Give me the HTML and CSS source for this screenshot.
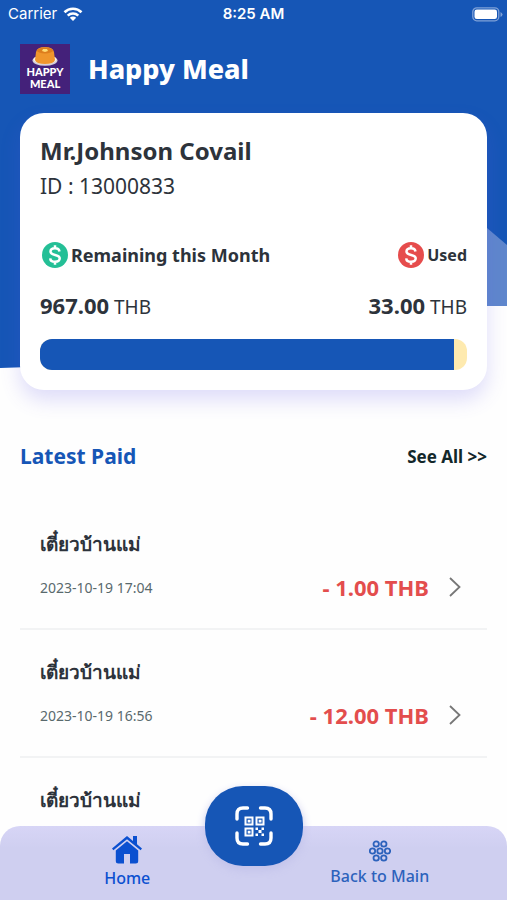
FILE: index.html
```html
<!DOCTYPE html>
<html lang="en">
<head>
<meta charset="utf-8">
<meta name="viewport" content="width=device-width, initial-scale=1">
<title>Happy Meal</title>
<link rel="stylesheet" href="styles.css">
</head>
<body>
<div class="app">
  <svg class="backdrop" viewBox="0 0 507 370" preserveAspectRatio="none" aria-hidden="true">
    <path fill="#1656b6" d="M0 0H507V305H440L60 366L0 368Z"/>
    <path fill="#5f87cc" d="M440 188L507 245V306H440Z"/>
  </svg>

  <div class="status">
    <span class="carrier">Carrier
      <svg width="20" height="15" viewBox="0 0 20 15" fill="none" stroke="#fff" stroke-width="2.6" aria-hidden="true">
        <path d="M1.5 5.2C6.2.6 13.8.6 18.500 5.200M4.700 8.600C7.700 5.800 12.300 5.800 15.300 8.600"/>
        <path fill="#fff" stroke="none" d="M6.800 10.700C8.600 9.100 11.400 9.100 13.200 10.700L10 14Z"/>
      </svg>
    </span>
    <span class="clock">8:25 AM</span>
    <svg class="battery" width="31" height="15" viewBox="0 0 31 15" aria-hidden="true">
      <rect x=".8" y=".8" width="26" height="13" rx="4" fill="none" stroke="#7fa1d7" stroke-width="1.300"/>
      <rect x="2.500" y="2.500" width="22.500" height="9.600" rx="2.300" fill="#fff"/>
      <path d="M28.500 5v5q2-1 2-2.500t-2-2.500" fill="#7fa1d7"/>
    </svg>
  </div>

  <header class="brand">
    <div class="logo">
      <svg width="26" height="20" viewBox="0 0 26 20" aria-hidden="true">
        <ellipse cx="13" cy="14.500" rx="12.500" ry="5.300" fill="#d5d0d8"/>
        <ellipse cx="13" cy="13.500" rx="11.500" ry="4.500" fill="#f5f0ee"/>
        <path d="M3 14L4 6Q5 1 13 1t9 5l1 8q-1 4-10 4T3 14Z" fill="#ef962c"/>
        <ellipse cx="13" cy="4.500" rx="8" ry="3" fill="#dd7d1d"/>
        <path d="M11 3h4l1 2-3 1-3-1Z" fill="#ffdc73"/>
      </svg>
      <span>HAPPY</span><span>MEAL</span>
    </div>
    <h1>Happy Meal</h1>
  </header>

  <section class="card">
    <h2>Mr.Johnson Covail</h2>
    <p class="member">ID : 13000833</p>
    <div class="pair labels">
      <span class="label">
        <svg width="26" height="26" viewBox="0 0 26 26" fill="none" aria-hidden="true"><circle cx="13" cy="13" r="13" fill="#24bf96"/><path d="M17.500 9.500C17.200 7.300 15.600 6.200 13 6.200S8.500 7.500 8.500 9.600C8.500 14.200 17.700 11.700 17.700 16.300 17.700 18.500 15.800 19.800 13 19.800S8.400 18.500 8.200 16.300M13 3.200v3.200M13 19.600v3.200" stroke="#fff" stroke-width="2.500"/></svg>
        Remaining this Month</span>
      <span class="label used">
        <svg width="26" height="26" viewBox="0 0 26 26" fill="none" aria-hidden="true"><circle cx="13" cy="13" r="13" fill="#e64c4c"/><path d="M17.500 9.500C17.200 7.300 15.600 6.200 13 6.200S8.500 7.500 8.500 9.600C8.500 14.200 17.700 11.700 17.700 16.300 17.700 18.500 15.800 19.800 13 19.800S8.400 18.500 8.200 16.300M13 3.200v3.200M13 19.600v3.200" stroke="#fff" stroke-width="2.500"/></svg>
        Used</span>
    </div>
    <div class="pair sums">
      <span><b>967.00</b> THB</span>
      <span><b>33.00</b> THB</span>
    </div>
    <div class="meter"><div class="fill" style="width:97%"></div></div>
  </section>

  <main>
    <div class="pair heading">
      <h2>Latest Paid</h2>
      <a href="#all">See All &gt;&gt;</a>
    </div>
    <ul class="payments">
      <li><a href="#p1"><span class="shop" lang="th">เตี๋ยวบ้านแม่</span>
        <span class="detail"><time>2023-10-19 17:04</time><strong>- 1.00 THB</strong>
        <svg width="12" height="20" viewBox="0 0 12 20" fill="none" stroke="#777" stroke-width="1.800" aria-hidden="true"><path d="M1 1l9.500 9L1 19"/></svg></span></a></li>
      <li><a href="#p2"><span class="shop" lang="th">เตี๋ยวบ้านแม่</span>
        <span class="detail"><time>2023-10-19 16:56</time><strong>- 12.00 THB</strong>
        <svg width="12" height="20" viewBox="0 0 12 20" fill="none" stroke="#777" stroke-width="1.800" aria-hidden="true"><path d="M1 1l9.500 9L1 19"/></svg></span></a></li>
      <li><a href="#p3"><span class="shop" lang="th">เตี๋ยวบ้านแม่</span></a></li>
    </ul>
  </main>

  <nav class="tabs">
    <a class="tab home" href="#home">
      <svg width="30" height="28" viewBox="0 0 30 28" aria-hidden="true"><path fill="#0b50d0" d="M15 0L0 12.500l1.400 1.800L15 3.200l13.600 11.100L30 12.500 25 8.300V0h-4v5ZM15 5.200L3.800 14.400V25q0 2.500 2.500 2.500H12V18h6v9.500h5.700q2.500 0 2.500-2.500V14.400Z"/></svg>
      Home</a>
    <button class="scan" type="button" aria-label="Scan QR code">
      <svg width="38" height="40" viewBox="0 0 38 40" fill="none" stroke="#fff" aria-hidden="true">
        <path stroke-width="3.400" stroke-linecap="round" d="M12.500 2H8Q2 2 2 8v5M25.500 2H30q6 0 6 6v5M2 27v5q0 6 6 6h4.500M36 27v5q0 6-6 6h-4.500"/>
        <path stroke-width="2" d="M10.500 11.500h7v7h-7zM21.500 11.500h7v7h-7zM10.500 22.500h7v7h-7z"/>
        <path fill="#fff" stroke="none" d="M12.700 13.700h2.800v2.800h-2.800zM23.700 13.700h2.800v2.800h-2.800zM12.700 24.700h2.800v2.800h-2.800zM20.500 21.500h2.500v2.500h-2.500zM26.500 21.500h2.500v2.500h-2.500zM23.500 24h3v3h-3zM20.500 27.500h2.500v2.500h-2.500zM26.500 27.500h2.500v2.500h-2.500z"/>
      </svg>
    </button>
    <a class="tab" href="#main">
      <svg width="22" height="22" viewBox="0 0 22 22" fill="none" stroke="#2c62bc" stroke-width="1.800" aria-hidden="true"><circle cx="7.200" cy="4" r="2.700"/><circle cx="14.800" cy="4" r="2.700"/><circle cx="3.500" cy="11" r="2.700"/><circle cx="11" cy="11" r="2.700"/><circle cx="18.500" cy="11" r="2.700"/><circle cx="7.200" cy="18" r="2.700"/><circle cx="14.800" cy="18" r="2.700"/></svg>
      Back to Main</a>
  </nav>
</div>
</body>
</html>
```
FILE: styles.css
```css
* { box-sizing: border-box; }
body {
  margin: 0;
  background: #fefefe;
  color: #2d333b;
  font-family: "Noto Sans", "Open Sans", sans-serif;
}
h1, h2, p, ul { margin: 0; padding: 0; }
a { color: inherit; text-decoration: none; }
svg { display: block; flex: none; }

.app {
  position: relative;
  height: 100vh;
  padding: 0 20px;
  overflow: hidden;
}
.backdrop {
  position: absolute;
  top: 0;
  left: 0;
  z-index: -1;
  width: 100%;
  height: 370px;
}

.status {
  display: grid;
  grid-template-columns: 1fr auto 1fr;
  align-items: center;
  height: 28px;
  margin: 0 -12px;
  color: #fff;
  font: 15px/20px Inter, sans-serif;
}
.carrier { display: flex; align-items: center; gap: 6px; }
.clock { font-weight: 600; }
.battery { justify-self: end; margin-right: -4px; }

.brand {
  display: flex;
  align-items: center;
  gap: 18px;
  margin: 16px 0 19px;
}
.logo {
  display: flex;
  flex-direction: column;
  align-items: center;
  width: 50px;
  height: 50px;
  padding-top: 2px;
  background: #44217a;
  color: #fff;
  font: 900 11px/12px Lato, sans-serif;
}
.brand h1 { color: #fff; font-size: 27px; line-height: 40px; font-weight: 800; }

.card {
  padding: 22px 20px 20px;
  border-radius: 24px;
  background: #fff;
  box-shadow: 0 10px 20px rgba(95, 85, 230, 0.2);
}
.card h2 { font-size: 24px; line-height: 32px; }
.member { font-size: 21px; line-height: 38px; }
.pair { display: flex; align-items: center; justify-content: space-between; }
.labels { height: 32px; margin-top: 34px; }
.label {
  display: flex;
  align-items: center;
  gap: 3px;
  padding-left: 2px;
  font-size: 18px;
  font-weight: 700;
}
.used { font-size: 16px; }
.sums { margin-top: 18px; font-size: 19px; line-height: 32px; }
.sums b { font-size: 22px; }
.meter {
  height: 31px;
  margin-top: 16px;
  overflow: hidden;
  border-radius: 12px;
  background: #feeaaf;
}
.fill { height: 100%; background: #1656b6; }

.heading { height: 32px; margin-top: 50px; }
.heading h2 { color: #1656b6; font-size: 21px; }
.heading a { color: #12272a; font-size: 17px; font-weight: 700; }

.payments { margin-top: 30px; list-style: none; }
.payments li { height: 128px; border-bottom: 2px solid #f2f3f4; }
.payments a { display: block; padding: 24px 26px 0 20px; }
.shop { display: block; font-size: 19px; line-height: 36px; font-weight: 800; }
.detail { display: flex; align-items: center; height: 50px; }
.detail time { flex: 1; color: #59696d; font-size: 14px; }
.detail strong { color: #e34d4d; font-size: 22px; }
.detail svg { margin-left: 20px; }

.tabs {
  position: absolute;
  right: 0;
  bottom: 0;
  left: 0;
  display: grid;
  grid-template-columns: 1fr 98px 1fr;
  height: 74px;
  border-radius: 20px 20px 0 0;
  background: linear-gradient(#d7d5f6, #cfcff0 30%);
}
.tab {
  display: flex;
  flex-direction: column;
  align-items: center;
  gap: 3px;
  padding: 14px 0 0 50px;
  color: #2c62bc;
  font-size: 16px;
  line-height: 22px;
  font-weight: 500;
}
.tab:last-child { padding: 14px 50px 0 0; }
.tab.home { padding-top: 10px; color: #0b50d0; }
.scan {
  display: grid;
  place-items: center;
  height: 80px;
  margin-top: -40px;
  padding: 0;
  border: 0;
  border-radius: 38px;
  background: #1656b6;
  box-shadow: 0 4px 10px #c2c2ea;
}
```
